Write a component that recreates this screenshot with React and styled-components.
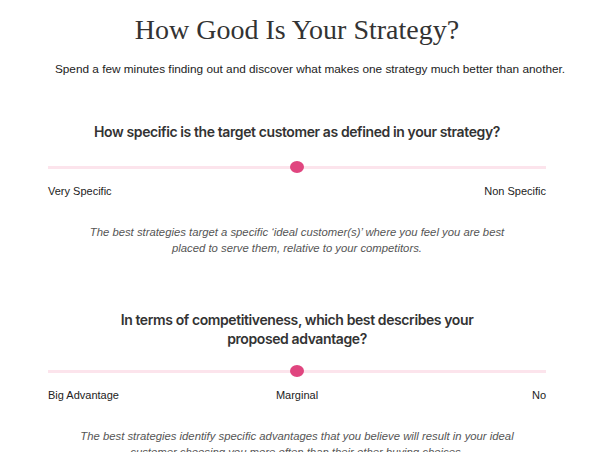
import styled, { createGlobalStyle } from "styled-components";

const Global = createGlobalStyle`
  html, body {
    margin: 0;
    padding: 0;
    background: #ffffff;
  }
  body {
    font-family: "Liberation Sans", Arial, sans-serif;
    color: #222;
  }
`;

const Page = styled.main`
  width: 498px;
  margin-left: 48px;
  padding-top: 12px;
  display: flex;
  flex-direction: column;
  align-items: center;
`;

const Title = styled.h1`
  margin: 0;
  font-family: "Liberation Serif", "DejaVu Serif", serif;
  font-weight: 400;
  font-size: 28px;
  line-height: 36px;
  color: #333;
`;

const Lead = styled.p`
  margin: 12px 0 0;
  padding-left: 26px;
  font-size: 11.8px;
  line-height: 18px;
  white-space: nowrap;
  color: #222;
`;

const Question = styled.section`
  width: 100%;
  margin-top: ${(p) => p.$top}px;
  display: flex;
  flex-direction: column;
  align-items: center;
`;

const Heading = styled.h2`
  margin: 0;
  max-width: ${(p) => p.$width}px;
  font-family: Inter, "Liberation Sans", sans-serif;
  font-weight: 600;
  font-size: 14px;
  line-height: 19px;
  letter-spacing: -0.4px;
  text-align: center;
  color: #333;
`;

const Slider = styled.div`
  position: relative;
  width: 100%;
  height: 12px;
  margin-top: ${(p) => p.$gap}px;
  display: flex;
  align-items: center;
`;

const Track = styled.div`
  width: 100%;
  height: 3px;
  background: #fce4ec;
`;

const Thumb = styled.span`
  position: absolute;
  top: 0;
  width: 14px;
  height: 12px;
  margin-left: -7px;
  border-radius: 50%;
  background: #e0457f;
`;

const Labels = styled.div`
  width: 100%;
  margin-top: 11px;
  display: grid;
  grid-auto-flow: column;
  grid-auto-columns: 1fr;
  font-size: 11px;
  line-height: 14px;
  color: #222;

  & > span {
    text-align: center;
  }
  & > span:first-child {
    text-align: left;
  }
  & > span:last-child {
    text-align: right;
  }
`;

const Note = styled.p`
  margin: 26px 0 0;
  width: 440px;
  font-size: 11.3px;
  line-height: 16px;
  font-style: italic;
  text-align: center;
  color: #555;
`;

const questions = [
  {
    title: "How specific is the target customer as defined in your strategy?",
    width: 480,
    labels: ["Very Specific", "Non Specific"],
    value: 50,
    note:
      "The best strategies target a specific \u2018ideal customer(s)\u2019 where you feel you are best placed to serve them, relative to your competitors.",
    top: 44,
    gap: 20,
  },
  {
    title:
      "In terms of competitiveness, which best describes your proposed advantage?",
    width: 380,
    labels: ["Big Advantage", "Marginal", "No"],
    value: 50,
    note:
      "The best strategies identify specific advantages that you believe will result in your ideal customer choosing you more often than their other buying choices.",
    top: 54,
    gap: 17,
  },
];

export default function App() {
  return (
    <>
      <Global />
      <Page>
        <Title>How Good Is Your Strategy?</Title>
        <Lead>
          Spend a few minutes finding out and discover what makes one strategy
          much better than another.
        </Lead>
        {questions.map((q) => (
          <Question key={q.title} $top={q.top}>
            <Heading $width={q.width}>{q.title}</Heading>
            <Slider $gap={q.gap}>
              <Track />
              <Thumb style={{ left: `${q.value}%` }} />
            </Slider>
            <Labels>
              {q.labels.map((l) => (
                <span key={l}>{l}</span>
              ))}
            </Labels>
            <Note>{q.note}</Note>
          </Question>
        ))}
      </Page>
    </>
  );
}
